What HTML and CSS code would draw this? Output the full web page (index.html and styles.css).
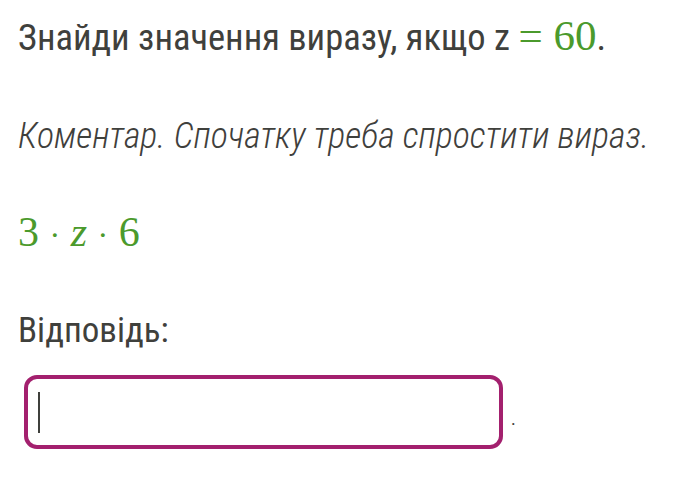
FILE: index.html
```html
<!DOCTYPE html>
<html lang="uk">
<head>
  <meta charset="UTF-8" />
  <title>Завдання</title>
  <link rel="stylesheet" href="styles.css">
</head>
<body>
  <div class="task">
    <!-- умова -->
    <p class="question">Знайди значення виразу, якщо z <span class="math">=&nbsp;60</span>.</p>
    <p class="comment">Коментар. Спочатку треба спростити вираз.</p>
    <p class="expr math">3 <span class="dot">·</span> <span class="var">z</span> <span class="dot">·</span> 6</p>

    <!-- відповідь -->
    <p class="answer-label">Відповідь:</p>
    <div class="answer-row">
      <div class="answer-box"><span class="caret"></span></div>
      <span class="answer-end">.</span>
    </div>
  </div>
</body>
</html>
```

FILE: styles.css
```css
html, body {
  margin: 0;
  padding: 0;
  background: #fff;
  font-family: 'Roboto', 'Liberation Sans', sans-serif;
  color: #3f403c;
}

.task {
  padding: 10px 18px;
}

.task p {
  margin: 0;
}

.question {
  font-size: 36.5px;
  line-height: 52px;
  font-stretch: condensed;
}

.math {
  font-family: 'Liberation Serif', serif;
  color: #4b9a2c;
}

.question .math {
  font-size: 43px;
}

.comment {
  margin-top: 48px !important;
  font-size: 36px;
  line-height: 48px;
  font-style: italic;
  font-weight: 300;
  font-stretch: condensed;
}

.expr {
  margin-top: 48px !important;
  font-size: 42px;
  line-height: 48px;
}

.expr .var {
  font-style: italic;
}

.expr .dot {
  font-size: 32px;
}

.answer-label {
  margin-top: 48px !important;
  font-size: 35px;
  line-height: 48px;
  font-stretch: condensed;
}

.answer-row {
  display: flex;
  align-items: center;
  gap: 8px;
  margin-top: 20px;
  padding-left: 6px;
}

.answer-box {
  width: 461px;
  height: 66px;
  border: 4px solid #a3206e;
  border-radius: 13px;
  display: flex;
  align-items: center;
  padding-left: 10px;
  box-sizing: content-box;
}

.caret {
  width: 2px;
  height: 41px;
  background: #3f403c;
}

.answer-end {
  font-size: 18px;
  margin-top: 12px;
}
```
